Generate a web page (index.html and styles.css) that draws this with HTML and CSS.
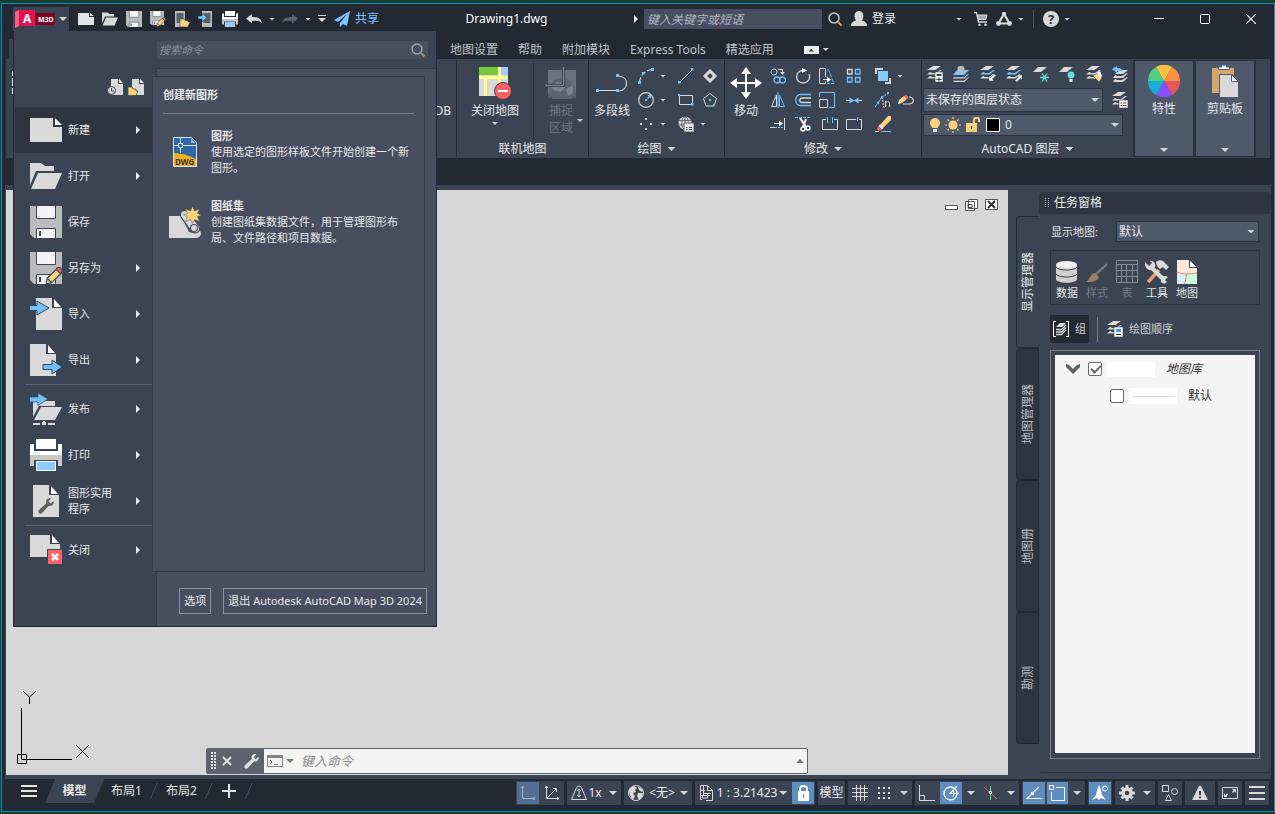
FILE: index.html
```html
<!DOCTYPE html>
<html lang="zh-CN">
<head>
    <meta charset="UTF-8">
    <meta name="viewport" content="width=device-width, initial-scale=1.0">
    <title>Drawing1.dwg</title>
    <link rel="stylesheet" href="styles.css">
</head>
<body>

<!-- shared icon shapes -->
<svg class="defs" aria-hidden="true">
    <symbol id="i-disk" viewBox="0 0 32 32">
        <path fill="#bbb" d="M0 0h32v32H4l-4-4z"/>
        <path fill="#f4f4f4" stroke="#3b4453" d="M6.500 -1h19v13.500h-19zM6.500 22.500h19v11h-19z"/>
        <path fill="#3b4453" d="M9 25h2v5H9z"/>
    </symbol>
    <symbol id="i-open" viewBox="0 0 32 32">
        <path fill="#d9d9d9" d="M0 3h11l4 3h9v5H6L0 25z"/>
        <path fill="#d9d9d9" d="M8 13h24l-7 16H1z"/>
    </symbol>
    <symbol id="i-print" viewBox="0 0 32 32">
        <path fill="#fff" d="M6 0h20v10H6zM0 5h4v7h24V5h4v11H0z"/>
        <path fill="#c8c8c8" d="M0 16h32v11h-4v-6H4v6H0z"/>
        <path fill="#8accff" stroke="#fff" d="M6.500 22.500h19v9h-19z"/>
    </symbol>
    <symbol id="i-pencil" viewBox="0 0 16 16">
        <path fill="#d9d9d9" stroke="#3b4453" d="M1 15l1-5 4 4z"/>
        <path fill="#ffd27a" stroke="#3b4453" d="M2 10l8-8 4 4-8 8z"/>
        <path fill="#ff6166" stroke="#3b4453" d="M10 2c1-2 3-2 4-1s2 3 0 5z"/>
    </symbol>
    <symbol id="i-layers" viewBox="0 0 16 16">
        <path fill="#d9d9d9" d="M6 0h8L8.500 4H0z"/>
        <path fill="#d9d9d9" d="M0 8.500L3 6h2L3.500 7H9l4-3h2L9.500 8.500zM0 12.500L3 10h2l-1.500 1H9l4-3h2l-5.500 4.500z"/>
    </symbol>
    <symbol id="i-layersblue" viewBox="0 0 16 16">
        <path fill="#d9d9d9" d="M6 0h8L8.500 4H0z"/>
        <path fill="#79c5ff" d="M0 8.500L3 6h2L3.500 7H9l4-3h2L9.500 8.500z"/>
        <path fill="#d9d9d9" d="M0 12.500L3 10h2l-1.500 1H9l4-3h2l-5.500 4.500z"/>
    </symbol>
    <symbol id="i-wrench" viewBox="0 0 16 16">
        <path d="M15.500 3l-3 2.500-2-2L13 .5c-2-1-5 0-5 3l.3 1.700L1 12c-2 2 1 5 3 3l6.800-7.300c3 1 5.700-1.700 4.700-4.700z"/>
    </symbol>
    <symbol id="i-mag" viewBox="0 0 14 14">
        <circle cx="6" cy="6" r="5" fill="none" stroke="#c6c9ce" stroke-width="1.500"/>
        <path stroke="#d8a75f" stroke-width="2" d="M10 10l3.500 3.500"/>
    </symbol>
</svg>

<div class="app">

    <!-- title bar -->
    <header class="titlebar">
        <button class="app-button" aria-label="应用程序菜单">
            <svg width="40" height="18" viewBox="0 0 40 18"><path fill="#80001f" d="M18 3h22v12H18z"/><path fill="#e51050" d="M4 0h16v16H4z"/><path fill="#ff5c80" d="M0 2l4-2v16l-4 2z"/><text x="8" y="13" class="logo-a">A</text><text x="23" y="12" class="logo-m">M3D</text></svg>
            <span class="caret big"></span>
        </button>
        <div class="qat">
            <button aria-label="新建"><svg width="16" height="16" viewBox="0 0 16 16"><path fill="#e4e4e4" d="M0 2h11v4h5v8H0z"/><path fill="#fff" d="M12 2l4 3h-4z"/></svg></button>
            <button aria-label="打开"><svg width="16" height="16"><use href="#i-open"/></svg></button>
            <button aria-label="保存"><svg width="16" height="16"><use href="#i-disk"/></svg></button>
            <button aria-label="另存为"><svg width="16" height="16"><use href="#i-disk" width="14" height="14"/><use href="#i-pencil" x="6" y="6" width="10" height="10"/></svg></button>
            <button aria-label="从移动设备打开"><svg width="16" height="16" viewBox="0 0 16 16"><path fill="#bbb" d="M1 0h10v16H1z"/><path fill="#5a6069" d="M2.500 2h7v10h-7z"/><path fill="#ffd27a" stroke="#222933" stroke-width=".5" d="M6 8h4l1 1.500h3V11h2l-2 5H6z"/></svg></button>
            <button aria-label="保存到移动设备"><svg width="16" height="16" viewBox="0 0 16 16"><path fill="#bbb" d="M4 0h10v16H4z"/><path fill="#5a6069" d="M5.500 2h7v10h-7z"/><path fill="#6fc1ff" stroke="#222933" stroke-width=".5" d="M0 5h4V2l5 4.500L4 11V8H0z"/></svg></button>
            <button aria-label="打印"><svg width="16" height="16"><use href="#i-print"/></svg></button>
            <button aria-label="放弃"><svg width="16" height="16" viewBox="0 0 16 16"><path fill="#d9d9d9" d="M0 7.500L6 3v3c6 0 9 2 10 6-2-2-5-2.500-10-2v2.500z"/></svg></button>
            <button class="thin" aria-label="放弃列表"><span class="caret"></span></button>
            <button aria-label="重做"><svg width="16" height="16" viewBox="0 0 16 16"><path fill="#5d646e" d="M16 7.500L10 3v3C4 6 1 8 0 12c2-2 5-2.500 10-2v2.500z"/></svg></button>
            <button class="thin" aria-label="重做列表"><span class="caret"></span></button>
            <button aria-label="自定义快速访问工具栏"><svg width="8" height="8" viewBox="0 0 8 8"><path fill="#d9d9d9" d="M0 0h8v1H0zM0 3h8L4 7z"/></svg></button>
            <button class="share"><svg width="16" height="16" viewBox="0 0 16 16"><path fill="#79c5ff" d="M16 0L0 9l4 2 9-8-7 9v4l3-3 4 2z"/></svg>共享</button>
        </div>
        <h1 class="doc-title">Drawing1.dwg</h1>
        <span class="caret-right"></span>
        <input class="help-search" type="text" placeholder="键入关键字或短语" aria-label="键入关键字或短语">
        <button class="mag" aria-label="搜索"><svg width="14" height="14"><use href="#i-mag"/></svg></button>
        <button class="account"><svg width="16" height="16" viewBox="0 0 16 16"><path fill="#d9d9d9" d="M0 15c0-4 3-5 5-5.500C2 5 4 0 8 0s6 5 3 9.500c2 .5 5 1.500 5 5.500z"/></svg>登录</button>
        <button class="tb-caret" aria-label="帐户菜单"><span class="caret"></span></button>
        <button class="tb-cart" aria-label="应用商店"><svg width="14" height="14" viewBox="0 0 14 14"><path fill="none" stroke="#d9d9d9" stroke-width="1.300" d="M0 .7h2.500L4.500 10H13"/><path fill="#a9a9a9" stroke="#d9d9d9" d="M3.500 3h9.500l-1 4.500H4.500z"/><circle fill="#d9d9d9" cx="5.500" cy="12.700" r="1.300"/><circle fill="#d9d9d9" cx="11.500" cy="12.700" r="1.300"/></svg></button>
        <button class="tb-apps" aria-label="Autodesk 应用"><svg width="16" height="14" viewBox="0 0 16 14"><path fill="none" stroke="#d9d9d9" stroke-width="2.200" d="M8 2l5.500 9.500h-11z"/><g fill="#d9d9d9"><circle cx="8" cy="2" r="2.200"/><circle cx="2.500" cy="11.500" r="2.400"/><circle cx="13.500" cy="11.500" r="2.400"/></g></svg></button>
        <button class="tb-caret" aria-label="应用菜单"><span class="caret"></span></button>
        <span class="tb-sep"></span>
        <button aria-label="帮助"><svg width="16" height="16" viewBox="0 0 16 16"><circle cx="8" cy="8" r="8" fill="#d9d9d9"/><text x="8" y="13" class="q-mark">?</text></svg></button>
        <button class="tb-caret" aria-label="帮助菜单"><span class="caret"></span></button>
        <div class="window-buttons">
            <button aria-label="最小化"><svg width="10" height="10" viewBox="0 0 10 10"><path fill="#fff" d="M0 4h10v1H0z"/></svg></button>
            <button aria-label="最大化"><svg width="10" height="10" viewBox="0 0 10 10"><rect x=".5" y=".5" width="9" height="9" rx="1" fill="none" stroke="#fff"/></svg></button>
            <button aria-label="关闭"><svg width="10" height="10" viewBox="0 0 10 10"><path stroke="#fff" stroke-width="1.200" d="M0 0l10 10M10 0L0 10"/></svg></button>
        </div>
    </header>

    <!-- ribbon tabs -->
    <nav class="tabs">
        <span class="tab-current"></span>
        <button>地图设置</button>
        <button>帮助</button>
        <button>附加模块</button>
        <button>Express Tools</button>
        <button>精选应用</button>
        <button class="tab-min" aria-label="最小化功能区"><span></span><i class="caret"></i></button>
    </nav>

    <!-- ribbon -->
    <div class="ribbon">
        <section class="panel p-data">
            <svg width="8" height="24" viewBox="0 0 8 24"><path fill="#e4e4e4" d="M0 0h8v5H0zM0 7h8v8H0zM0 17h8v6H0z"/></svg>
            <span>DB</span>
        </section>

        <section class="panel p-online">
            <div class="panel-body">
                <button class="big-btn close-map">
                    <svg width="32" height="32" viewBox="0 0 32 32"><path fill="#d9d9d9" d="M0 0h29v29H0z"/><path fill="#76c839" d="M0 0h19v8H0z"/><path fill="#a8c8ff" d="M22 0h7v8h-7z"/><path stroke="#ffff8a" stroke-width="3" d="M0 10.500h29M20.500 0v29M6.500 10.500V29"/><circle cx="24" cy="24" r="8.500" fill="#ff5f63" stroke="#3b4453"/><path fill="#fff" d="M19 23h10v2H19z"/></svg>
                    关闭地图
                    <span class="caret"></span>
                </button>
                <button class="big-btn snap" disabled>
                    <svg width="32" height="32" viewBox="0 0 32 32"><path fill="#6b7280" d="M3 3h28v28H3z"/><circle cx="17" cy="24" r="13" fill="#5c6473"/><path fill="#7c8390" d="M6 20l6-5 6 1 2 4-4 5-7-2zM21 22l7-4v8l-5 3z"/><path fill="#3b4453" d="M3 31v-6c1 3 3 5 5 6zM31 31v-6c-1 3-3 5-5 6z" opacity=".5"/><path fill="none" stroke="#3b4453" stroke-width="3" d="M0 18.500h18.500V0"/><path fill="none" stroke="#878d98" d="M0 18.500h18.500V0"/></svg>
                    捕捉<br>区域
                    <span class="caret"></span>
                </button>
            </div>
            <h2>联机地图</h2>
        </section>

        <section class="panel p-draw">
            <div class="panel-body">
                <button class="big-btn">
                    <svg width="32" height="32" viewBox="0 0 32 32"><path fill="none" stroke="#d9d9d9" stroke-width="1.200" d="M2 23.500h20M23 24c10-1 10-14 0-15"/><path fill="#6fc1ff" d="M0 22h3v3H0zM20 22h3v3h-3zM20 7h3v3h-3z"/></svg>
                    多段线
                </button>
                <div class="tools draw-tools">
                    <button aria-label="圆弧"><svg viewBox="0 0 16 16"><path fill="none" stroke="#d9d9d9" stroke-width="1.200" stroke-dasharray="5 2" d="M1.500 14C2 8 7 2 14 1.500"/><path fill="#6fc1ff" d="M0 13h3v3H0zM4 4h2v2H4zM13 0h3v3h-3z"/></svg></button>
                    <i class="caret"></i>
                    <button aria-label="直线"><svg viewBox="0 0 16 16"><path stroke="#d9d9d9" d="M2 14L14 2"/><path fill="#6fc1ff" d="M0 13h2.500v2.500H0zM13 0h2.500v2.500H13z"/></svg></button>
                    <i></i>
                    <button aria-label="区域覆盖"><svg viewBox="0 0 16 16"><path fill="none" stroke="#d9d9d9" stroke-width="3" d="M8 3l5 5-5 5-5-5z"/></svg></button>

                    <button aria-label="圆"><svg viewBox="0 0 16 16"><circle cx="8" cy="8" r="7.300" fill="none" stroke="#d9d9d9" stroke-width="1.200"/><path fill="#6fc1ff" d="M7 7h2v2H7zM10 3h3v3h-1v-1l-2 2-1-1 2-2h-1z"/></svg></button>
                    <i class="caret"></i>
                    <button aria-label="矩形"><svg viewBox="0 0 16 16"><path fill="none" stroke="#d9d9d9" d="M1.500 3.500h13v9h-13z"/><path fill="#6fc1ff" d="M0 2h2v2H0zM13 11h2.500v2.500H13z"/></svg></button>
                    <i></i>
                    <button aria-label="多边形"><svg viewBox="0 0 16 16"><path fill="none" stroke="#d9d9d9" d="M8 1.500l6.500 5-2.500 7.500H4L1.500 6.500z"/><path fill="#6fc1ff" d="M7 7h2v2H7zM11 12h2v2h-2z"/></svg></button>

                    <button aria-label="多点"><svg viewBox="0 0 16 16"><path fill="#d9d9d9" d="M7 2h2v2H7zM2 7h2v2H2zM12 7h2v2h-2zM7 12h2v2H7z"/></svg></button>
                    <i class="caret"></i>
                    <button aria-label="坐标系"><svg viewBox="0 0 16 16"><circle cx="7" cy="7" r="6.500" fill="#d9d9d9"/><path stroke="#3b4453" stroke-width=".7" d="M1 4.500h12M1 9h12M7 0v14"/><ellipse cx="7" cy="7" rx="3.300" ry="6.500" fill="none" stroke="#3b4453" stroke-width=".7"/><path fill="#e4e4e4" stroke="#3b4453" stroke-width=".7" d="M6 7h10v9H6z"/><path stroke="#3b4453" d="M8 11.500h1.500M11 11.500h3M8 13.500h1.500M11 13.500h3"/></svg></button>
                    <i class="caret"></i>
                </div>
            </div>
            <h2>绘图<span class="caret big"></span></h2>
        </section>

        <section class="panel p-modify">
            <div class="panel-body">
                <button class="big-btn">
                    <svg width="32" height="32" viewBox="0 0 32 32"><path fill="#fff" d="M16 0l5 7h-4v8h8v-4l7 5-7 5v-4h-8v8h4l-5 7-5-7h4v-8H7v4l-7-5 7-5v4h8V7h-4z"/></svg>
                    移动
                </button>
                <div class="tools modify-tools">
                    <button aria-label="复制"><svg viewBox="0 0 16 16"><circle cx="4" cy="4" r="3" fill="none" stroke="#d9d9d9"/><g fill="none" stroke="#6fc1ff" stroke-width="1.300"><circle cx="7" cy="12" r="3"/><circle cx="12.500" cy="12" r="3"/></g><path fill="#d9d9d9" d="M8 1h5v3h2l-2.500 3L10 4h2V2H8z"/></svg></button>
                    <button aria-label="旋转"><svg viewBox="0 0 16 16"><path fill="none" stroke="#d9d9d9" stroke-width="1.300" d="M8 2.500C-1 3 0 15 8 15c5 0 8-5 6-9"/><path fill="#fff" d="M7 0l5 2.500L7 5z"/></svg></button>
                    <button aria-label="拉伸"><svg viewBox="0 0 16 16"><path fill="none" stroke="#d9d9d9" d="M6.500 9V.5h-6v15h6v-2M4 11.500h6"/><path fill="#fff" d="M8 8.500l4 3-4 3z"/><path fill="none" stroke="#6fc1ff" stroke-dasharray="4 1" d="M9 1l6 14.500H8"/></svg></button>
                    <button aria-label="阵列"><svg viewBox="0 0 16 16"><g fill="none" stroke-width="1.300"><path stroke="#d9d9d9" d="M1.500 1.500h4.500v4.500H1.500z"/><path stroke="#6fc1ff" d="M9.500 1.500H14v4.500H9.500zM1.500 9.500h4.500V14H1.500zM9.500 9.500H14V14H9.500z"/></g></svg></button>
                    <button aria-label="绘图次序"><svg viewBox="0 0 16 16"><path fill="#d9d9d9" d="M0 0h8v2H2v4H0zM10 14h4v-4h2v6h-6z"/><path fill="#8accff" d="M3 3h10v10H3z"/></svg></button>
                    <i class="caret"></i>

                    <button aria-label="镜像"><svg viewBox="0 0 16 16"><path fill="none" stroke="#d9d9d9" d="M6.500 3v11.500h-5z"/><path fill="none" stroke="#6fc1ff" d="M9.500 3v11.500h5zM8 0v16"/></svg></button>
                    <button aria-label="偏移"><svg viewBox="0 0 16 16"><path fill="none" stroke="#6fc1ff" stroke-width="1.300" d="M16 2.500H6c-7 0-7 11 0 11h10"/><path fill="none" stroke="#d9d9d9" stroke-width="1.300" d="M16 6H7c-3 0-3 4.500 0 4.500h9"/></svg></button>
                    <button aria-label="缩放"><svg viewBox="0 0 16 16"><path fill="none" stroke="#6fc1ff" d="M.5 5V.5h15v15H10"/><path fill="none" stroke="#d9d9d9" d="M.5 7.500h8v8h-8z"/></svg></button>
                    <button aria-label="合并"><svg viewBox="0 0 16 16"><path stroke="#d9d9d9" d="M0 8.500h4M12 8.500h4"/><path fill="#6fc1ff" d="M3.500 5.500l4 2.500h1l4-2.500v6L8.500 9h-1l-4 2.500z"/></svg></button>
                    <button aria-label="编辑多段线"><svg viewBox="0 0 16 16"><path fill="none" stroke="#d9d9d9" stroke-dasharray="2 1" d="M0 15L7 5l7-4M7 5l2 11"/><path fill="none" stroke="#d9d9d9" d="M10.500 15V9M10.500 11c1-2 4-2 4 1v3"/><path fill="#6fc1ff" d="M6 4h2v2H6zM12 0h2v2h-2zM2 10h2v2H2z"/></svg></button>
                    <button class="revcloud" aria-label="修订云线"><svg viewBox="0 0 16 16"><path fill="none" stroke="#d9d9d9" stroke-width="1.200" d="M5 12h7c5-1 4-7-1-7"/><path fill="#ffd27a" d="M1 8l5-4 3 3-5 4z"/><path fill="#ff6166" d="M6 4l2-1.500L10.500 5 9 7z"/><path fill="#eee" d="M1 8l3 3-4 1z"/></svg></button>

                    <button aria-label="延伸"><svg viewBox="0 0 16 16"><path stroke="#d9d9d9" d="M14.500 2v12M4 7.500h6"/><path stroke="#6fc1ff" stroke-dasharray="2 1" d="M5 11.500h9"/><path stroke="#d9d9d9" d="M0 11.500h5"/><path fill="#fff" d="M9 4.500l4 3-4 3z"/></svg></button>
                    <button aria-label="修剪"><svg viewBox="0 0 16 16"><path stroke="#6fc1ff" stroke-dasharray="3 1" d="M0 1.500h16"/><path stroke="#fff" stroke-width="2" d="M5 2l6 9M11 3l-3 8"/><circle cx="8" cy="13" r="2" fill="none" stroke="#fff" stroke-width="1.500"/><circle cx="13" cy="12" r="2" fill="none" stroke="#fff" stroke-width="1.500"/></svg></button>
                    <button class="shift" aria-label="打断"><svg viewBox="0 0 16 16"><path fill="none" stroke="#d9d9d9" d="M4 3.500H.5v10h15v-10H12"/><path stroke="#6fc1ff" d="M5.500 1v6M10.500 1v6"/></svg></button>
                    <button aria-label="打断于点"><svg viewBox="0 0 16 16"><path fill="none" stroke="#d9d9d9" d="M10 3.500H.5v10h15v-10H13"/><path stroke="#6fc1ff" d="M11.500 1v4"/></svg></button>
                    <button aria-label="删除"><svg viewBox="0 0 16 16"><path fill="#ffd27a" d="M13 0h3v4l-8 8-3-3z"/><path fill="#eee" d="M5 8.500l3.500 3.500L7 13.500 3.500 10z"/><path fill="#ff6166" d="M3.500 10L7 13.500 4 15l-2-2z"/><path stroke="#6fc1ff" d="M6 15.500h10"/><path stroke="#d9d9d9" d="M0 15.500h4"/></svg></button>
                </div>
            </div>
            <h2>修改<span class="caret big"></span></h2>
        </section>

        <section class="panel p-layer">
            <div class="layer-tools">
                <button aria-label="图层特性"><svg viewBox="0 0 16 16"><use href="#i-layers"/><path fill="#fff" stroke="#3b4453" stroke-width=".6" d="M8 6h8v10H8z"/><path fill="#3b4453" d="M9.500 8h5v2h-5zM9.500 13h5v1h-5zM11.500 11.500h1v4h-1z"/></svg></button>
                <button aria-label="置为当前"><svg viewBox="0 0 16 16"><path fill="#79c5ff" d="M4 4h12l-5 5H0z"/><circle cx="8" cy="3" r="3.500" fill="#bbb"/><path fill="#d9d9d9" d="M2 10l-1.500 1.200H11l4-3.500h1L11.500 12.500H0zM2 13.500L.5 14.700H11l4-3.500h1L11.500 16H0z"/></svg></button>
                <button aria-label="匹配图层"><svg viewBox="0 0 16 16"><use href="#i-layersblue"/><path fill="#fff" stroke="#3b4453" stroke-width=".5" d="M16 9.500l-3.500 3.500 1.500 2H9v-5l1.500 1.500L14.500 8z"/></svg></button>
                <button aria-label="上一个"><svg viewBox="0 0 16 16"><use href="#i-layersblue"/><path fill="#fff" stroke="#3b4453" stroke-width=".5" d="M9 14.500l3.500-3.500L11 9h5v5l-1.500-1.500L10.500 16z"/></svg></button>
                <button aria-label="冻结"><svg viewBox="0 0 16 16"><path fill="#d9d9d9" d="M5 1h9L8 6H0z"/><path stroke="#62e0e0" stroke-width="1.300" d="M7 11.500h9M9 7.500l5 8M14 7.500l-5 8"/></svg></button>
                <button aria-label="关闭图层"><svg viewBox="0 0 16 16"><path fill="#d9d9d9" d="M5 1h9L8 6H0z"/><circle cx="12" cy="9" r="3.500" fill="#62e0e0"/><path fill="#fff" d="M10.500 13h3v3h-3z"/></svg></button>
                <button aria-label="图层匹配"><svg viewBox="0 0 16 16"><use href="#i-layers"/><path fill="#ffd27a" stroke="#3b4453" stroke-width=".5" d="M7 10l4-3 5 5-3 4z"/><path fill="#fff" d="M11 7l3-2 2 5-2 2z"/></svg></button>
                <button aria-label="恢复"><svg viewBox="0 0 16 16"><path fill="#d9d9d9" d="M8 4h8l-5 4H3zM3 9h2L4 10h6l5-3h1l-5 5H1zM3 13h2L4 14h6l5-3h1l-5 5H1z"/><path fill="#6fc1ff" d="M0 3l5-3v2c4 0 5 1 6 4-2-1-3-1-6-1v2z"/></svg></button>
            </div>
            <div class="layer-row">
                <div class="combo state">
                    <select aria-label="图层状态"><option>未保存的图层状态</option></select>
                </div>
                <button aria-label="图层状态管理器"><svg width="16" height="16" viewBox="0 0 16 16"><use href="#i-layers"/><path fill="#fff" stroke="#3b4453" stroke-width=".6" d="M7 8h9v8H7z"/><path stroke="#3b4453" d="M8.500 11h1.500M11 11h3.500M8.500 13.500h1.500M11 13.500h3.500"/></svg></button>
            </div>
            <div class="combo current-layer">
                <svg width="72" height="16" viewBox="0 0 72 16">
                    <circle cx="6" cy="6" r="5" fill="#ffd27a"/><path fill="#ffd27a" d="M3 8h6v3H3z"/><path fill="#eee" d="M4 12h4v3H4z"/>
                    <circle cx="24" cy="8" r="4.500" fill="#ffd27a"/><path stroke="#ffd27a" stroke-width="1.200" d="M24 0v2M24 14v2M16 8h2M30 8h2M18.500 2.500l1.500 1.500M28 12l1.500 1.500M29.500 2.500L28 4M20 12l-1.500 1.500"/>
                    <path fill="#ffd27a" d="M37 6h11v9H37z"/><path fill="none" stroke="#ffd27a" stroke-width="2" d="M45 6V3c0-3 5-3 5 0v2"/><path fill="#3b4453" d="M42 9h1v3h-1z"/>
                    <path stroke="#fff" d="M57.500 1.500h13v13h-13z"/>
                </svg>
                <select aria-label="图层"><option>0</option></select>
            </div>
            <h2>AutoCAD 图层<span class="caret big"></span></h2>
        </section>

        <button class="folded">
            <svg width="32" height="32" viewBox="0 0 32 32"><path fill="#ffc23e" d="M16 16L8 2a16 16 0 0 1 16 0z"/><path fill="#ff9045" d="M16 16l8-14a16 16 0 0 1 8 14z"/><path fill="#e65858" d="M16 16h16a16 16 0 0 1-8 14z"/><path fill="#8a50ff" d="M16 16l8 14a16 16 0 0 1-16 0z"/><path fill="#13b1d4" d="M16 16L8 30a16 16 0 0 1-8-14z"/><path fill="#50d080" d="M16 16H0A16 16 0 0 1 8 2z"/></svg>
            特性
            <span class="caret big"></span>
        </button>
        <button class="folded">
            <svg width="32" height="32" viewBox="0 0 32 32"><path fill="#d5a76d" d="M3 3h22v25H3z"/><path fill="#fff" stroke="#4f596c" d="M9.500 4.500V2h3V0h5v2h3v2.500z"/><path fill="#d9d9d9" stroke="#4f596c" d="M10.500 9.500h13l6 6.500v16.500h-19z"/><path fill="#fff" stroke="#4f596c" d="M22.500 9.500v7h7z"/></svg>
            剪贴板
            <span class="caret big"></span>
        </button>
    </div>

    <!-- drawing area and task pane -->
    <main class="workspace">
        <div class="canvas">
            <div class="doc-buttons">
                <button aria-label="最小化图形"><svg width="13" height="13" viewBox="0 0 13 13"><path fill="#fff" stroke="#555" d="M.5 6.500h12v4H.5z"/></svg></button>
                <button aria-label="还原图形"><svg width="13" height="13" viewBox="0 0 13 13"><path fill="#fff" stroke="#555" d="M3.500.5h9v9h-9zM.5 2.500h9v9h-9z"/><path fill="none" stroke="#444" d="M3 5.500h4v3H3z"/></svg></button>
                <button aria-label="关闭图形"><svg width="13" height="13" viewBox="0 0 13 13"><path fill="#fff" stroke="#555" d="M.5.500h12v10H.5z"/><path stroke="#333" stroke-width="2" d="M3 2l7 7M10 2L3 9"/></svg></button>
            </div>
            <svg class="ucs" width="74" height="76" viewBox="0 0 74 76"><path fill="none" stroke="#000" d="M6 1l6.500 6L19 1M12.500 7v7M4.500 18v51M4.500 69.500H55M.5 64.500h9v9h-9zM59 55l13 13M72 55L59 68"/></svg>
            <div class="command">
                <svg class="grip" width="5" height="18" viewBox="0 0 5 18"><path stroke="#e0e0e0" stroke-width="2" stroke-dasharray="2 1" d="M1 0v18M4 0v18"/></svg>
                <button aria-label="关闭命令行"><svg width="10" height="10" viewBox="0 0 10 10"><path stroke="#e0e0e0" stroke-width="2" d="M1 1l8 8M9 1L1 9"/></svg></button>
                <button aria-label="自定义"><svg width="15" height="15" fill="#e0e0e0"><use href="#i-wrench"/></svg></button>
                <div class="command-input">
                    <svg width="17" height="13" viewBox="0 0 17 13"><path fill="none" stroke="#858585" d="M.5.500h15v11H.5z"/><path fill="#858585" d="M0 0h16v3H0z"/><path fill="none" stroke="#858585" d="M3 5l2 2-2 2M7 9.500h4"/></svg>
                    <span class="caret big"></span>
                    <input type="text" placeholder="键入命令" aria-label="键入命令">
                    <span class="caret big up"></span>
                </div>
            </div>
        </div>

        <aside class="palette">
            <nav class="side-tabs">
                <button class="on">显示管理器</button>
                <button>地图管理器</button>
                <button>地图册</button>
                <button>勘测</button>
            </nav>
            <div class="pane">
                <h2><svg width="4" height="10" viewBox="0 0 4 10"><path stroke="#9aa0aa" stroke-dasharray="1 1" d="M.5 0v10M3.500 0v10"/></svg>任务窗格</h2>
                <div class="pane-body">
                    <div class="map-row">
                        <label for="map">显示地图:</label>
                        <div class="combo"><select id="map"><option>默认</option></select></div>
                    </div>
                    <div class="pane-tools">
                        <button><svg viewBox="0 0 24 24"><path fill="#d0d0d0" d="M1 5v14c0 5 21 5 21 0V5z"/><ellipse cx="11.500" cy="4.500" rx="10.500" ry="3.500" fill="#f0f0f0"/><path fill="none" stroke="#3b4453" d="M1 7c2 4 19 4 21 0M1 14c2 4 19 4 21 0"/></svg>数据</button>
                        <button disabled><svg viewBox="0 0 24 24"><path stroke="#7d828b" stroke-width="2" d="M11 14L22 4"/><path fill="#9a8065" d="M1 22c5-3 4-9 9-9l4 4c-2 5-8 5-13 5z"/></svg>样式</button>
                        <button disabled><svg viewBox="0 0 24 24"><path fill="none" stroke="#858b95" d="M1.500.500h21v22h-21zM1 4.500h22M1 10.500h22M1 16.500h22M6.500 4v19M11.500 4v19M17.500 4v19"/></svg>表</button>
                        <button><svg viewBox="0 0 24 24"><path stroke="#ef9d68" stroke-width="3.500" d="M14 10L3 22"/><path fill="#d9d9d9" d="M11 2c3-3 7-2 9 1l4 4-3 3-3-3-3 2-3-3z"/><path fill="none" stroke="#d9d9d9" stroke-width="4" d="M5 6l14 14"/><path fill="#d9d9d9" d="M0 2l4 4 3-3-2-2c4-1 6 3 5 6L7 10C3 11-1 7 0 2zM16 20c0-4 4-5 7-3l-3 3 2 2c-3 3-7 1-6-2z"/></svg>工具</button>
                        <button><svg viewBox="0 0 24 24"><path fill="#ffe9d9" d="M2 0h20v24H2z"/><path fill="#d8eeff" d="M2 13l9 1v10H2z"/><path fill="#d2f8dc" d="M11 14l11-1v11H9z"/><path fill="none" stroke="#e08080" d="M2 12c7 3 13 2 20 1M12 14c-2 3 0 6-3 10"/><path fill="#fff" stroke="#3b4453" d="M14.500 0v7.500H23z"/><path fill="#3b4453" d="M15 0h7v7z"/></svg>地图</button>
                    </div>
                    <div class="mode-row">
                        <button class="on"><svg width="16" height="16" viewBox="0 0 16 16"><path fill="none" stroke="#fff" d="M3 .5H.5v15H3M13 .5h2.500v15H13"/><path fill="#d9d9d9" d="M7 2h6L9 6H3z"/><path fill="none" stroke="#d9d9d9" stroke-width="1.300" d="M3 8.500h5.500l4.500-4.500M3 11h5.500l4.500-4.500M3 13.500h5.500L13 9"/></svg>组</button>
                        <span class="mode-sep"></span>
                        <button><svg width="16" height="16" viewBox="0 0 16 16"><use href="#i-layers"/><path fill="#fff" stroke="#3b4453" stroke-width=".6" d="M7 6h9v10H7z"/><path fill="#4a9fe8" d="M9 8h5v3H9z"/><path fill="#222933" d="M9 13h5v1H9z"/></svg>绘图顺序</button>
                    </div>
                    <div class="tree">
                        <div class="tree-list">
                            <div class="tree-row">
                                <svg width="14" height="10" viewBox="0 0 14 10"><path fill="#606060" d="M0 0l3 1 4 4 4-4 3-1v3l-7 7-7-7z"/></svg>
                                <input type="checkbox" id="lib" checked>
                                <span class="swatch"></span>
                                <label class="italic" for="lib">地图库</label>
                            </div>
                            <div class="tree-row child">
                                <input type="checkbox" id="def">
                                <span class="swatch line"></span>
                                <label for="def">默认</label>
                            </div>
                        </div>
                    </div>
                </div>
            </div>
        </aside>
    </main>

    <!-- status bar -->
    <footer class="statusbar">
        <button class="burger" aria-label="布局菜单"><svg width="16" height="12" viewBox="0 0 16 12"><path fill="#e4e4e4" d="M0 0h16v2H0zM0 5h16v2H0zM0 10h16v2H0z"/></svg></button>
        <button class="layout on">模型</button>
        <button class="layout">布局1</button><span class="slash"></span>
        <button class="layout">布局2</button><span class="slash"></span>
        <button class="plus" aria-label="新建布局"><svg width="14" height="14" viewBox="0 0 14 14"><path fill="#e4e4e4" d="M6 0h2v6h6v2H8v6H6V8H0V6h6z"/></svg></button><span class="slash"></span>

        <div class="status-tools">
            <div class="group">
                <button class="cell dim" aria-label="模型空间"><svg viewBox="0 0 16 16"><path fill="none" stroke="#a9b4c4" d="M2.500 1v12.500H15M1 3l1.500-2L4 3M13 12l2 1.500-2 1.500"/></svg></button>
                <button class="cell" aria-label="显示 UCS"><svg viewBox="0 0 16 16"><path fill="none" stroke="#d9d9d9" d="M2.500 1v12.500H15M1 3l1.500-2L4 3M13 12l2 1.500-2 1.500M3 13l9-9M9 3.500h3.500V7"/></svg></button>
            </div>
            <button class="group g-scale"><svg viewBox="0 0 16 16"><path fill="none" stroke="#d9d9d9" d="M.5 14.500h15L11 4c-1-4-5-4-6 0zM8 4v8M6 6l2-2 2 2M6 10l2 2 2-2"/></svg><span>1x</span><i class="caret big"></i></button>
            <button class="group g-geo"><svg viewBox="0 0 16 16"><circle cx="8" cy="8" r="7.500" fill="#3b4453" stroke="#d9d9d9"/><path fill="#d9d9d9" d="M1 4l5-3 3 2-2 2 1 2-3 1 2 3-2 4C2 12 1 8 1 6zM10 2l3 1 2 3-1 1-3-2zM10 8h5l-1 4-3 3-2-4z"/></svg><span>&lt;无&gt;</span><i class="caret big"></i></button>
            <div class="group g-vp">
                <button><svg viewBox="0 0 16 16"><path fill="none" stroke="#d9d9d9" d="M3 14.500H1.500v-14h7l5 5v10H7M8.500.500v5h5M2 5.500h4M2 10.500h9M4.500 1v9M8.500 8v5h-5v-3M4 8.500h8"/></svg><span>1 : 3.21423</span><i class="caret big"></i></button>
                <button class="cell on" aria-label="锁定"><svg viewBox="0 0 16 16"><path fill="#fff" d="M3 6h11v10H3z"/><path fill="none" stroke="#fff" stroke-width="2" d="M5 6V4c0-4 7-4 7 0v2"/><path fill="#5f8dc0" d="M8 9h1v4H8z"/></svg></button>
            </div>
            <button class="group g-model">模型</button>
            <div class="group g-grid">
                <button class="cell" aria-label="栅格"><svg viewBox="0 0 16 16"><path stroke="#d9d9d9" d="M4.500 0v16M8.500 0v16M12.500 0v16M0 3.500h16M0 7.500h16M0 11.500h16"/></svg></button>
                <button class="cell" aria-label="捕捉"><svg viewBox="0 0 16 16"><path stroke="#d9d9d9" stroke-width="2" stroke-dasharray="2 3" d="M2 3h12M2 8h12M2 13h12"/></svg></button>
                <button class="mini" aria-label="捕捉设置"><i class="caret big"></i></button>
            </div>
            <div class="group g-ortho">
                <button class="cell" aria-label="正交"><svg viewBox="0 0 16 16"><path fill="none" stroke="#d9d9d9" d="M.5 0v15.500H16M.5 10.500h5v5"/></svg></button>
                <button class="cell on" aria-label="极轴追踪"><svg viewBox="0 0 16 16"><circle cx="7.500" cy="8.500" r="6.500" fill="none" stroke="#fff" stroke-width="1.300"/><path fill="none" stroke="#fff" stroke-width="1.200" d="M16 8.500H7L14 1M10 5.500c1 1 1 4 0 6"/></svg></button>
                <button class="mini" aria-label="极轴设置"><i class="caret big"></i></button>
                <button class="cell" aria-label="等轴测"><svg viewBox="0 0 16 16"><path stroke="#e86060" d="M1 2l13 12"/><path stroke="#5fdc8c" d="M7.500 1v14"/><path fill="#3b4453" stroke="#fff" d="M6.500 6.500h2v2h-2z"/></svg></button>
                <button class="mini" aria-label="等轴测设置"><i class="caret big"></i></button>
            </div>
            <div class="group g-snap">
                <button class="cell on" aria-label="对象追踪"><svg viewBox="0 0 16 16"><path fill="none" stroke="#fff" stroke-width="1.200" d="M16 13.500H1L13 2"/><path fill="#fff" d="M5 7h3v3H5z"/></svg></button>
                <button class="cell on" aria-label="对象捕捉"><svg viewBox="0 0 16 16"><path fill="none" stroke="#fff" d="M7 2.500h8.500v13h-13V7M.5.500h4v4h-4z"/></svg></button>
                <button class="mini" aria-label="捕捉选项"><i class="caret big"></i></button>
            </div>
            <div class="group"><button class="cell on wide" aria-label="注释可见性"><svg viewBox="0 0 16 16"><path fill="#fff" d="M7 0l2 5 1 5 4 5-5-2-2 2-2-2-5 2 4-5 1-5z"/><circle cx="13" cy="3.500" r="2.500" fill="none" stroke="#fff"/></svg></button></div>
            <div class="group g-gear">
                <button class="cell" aria-label="切换工作空间"><svg viewBox="0 0 16 16"><circle cx="8" cy="8" r="4" fill="none" stroke="#d9d9d9" stroke-width="3.500"/><path stroke="#d9d9d9" stroke-width="3" d="M8 0v4M8 12v4M0 8h4M12 8h4M2.500 2.500L5 5M11 11l2.500 2.500M13.500 2.500L11 5M5 11l-2.500 2.500"/></svg></button>
                <button class="mini" aria-label="工作空间列表"><i class="caret big"></i></button>
            </div>
            <div class="group"><button class="cell wide" aria-label="隔离对象"><svg viewBox="0 0 16 16"><path fill="none" stroke="#d9d9d9" d="M.5.500h6v6h-6zM6.500 9.500l3 6h-6z"/><circle cx="12.500" cy="6.500" r="3" fill="none" stroke="#d9d9d9"/></svg></button></div>
            <div class="group g-warn"><button class="cell" aria-label="图形性能"><svg viewBox="0 0 16 16"><path fill="#d9d9d9" d="M7 1h2l7 14H0z"/><path fill="#3b4453" d="M7 6h2v4H7zM7 11.500h2v2H7z"/></svg></button></div>
            <div class="group"><button class="cell wide" aria-label="全屏显示"><svg viewBox="0 0 16 16"><path fill="none" stroke="#d9d9d9" d="M.5 2.500h15v11H.5z"/><path fill="#d9d9d9" d="M10 4h4v4l-1.500-1.500L11 8l-1-1 1.500-1.500zM2 12V8.500l1.500 1.500L5 8.500l1 1L4.500 11l1 1z"/></svg></button></div>
            <div class="group"><button class="cell wide" aria-label="自定义"><svg viewBox="0 0 16 16"><path fill="#d9d9d9" d="M0 1h16v2H0zM0 7h16v2H0zM0 13h16v2H0z"/></svg></button></div>
        </div>
    </footer>

    <!-- application menu -->
    <div class="menu">
        <div class="menu-top">
            <div class="menu-search"><input type="text" placeholder="搜索命令" aria-label="搜索命令"><svg width="14" height="14"><use href="#i-mag"/></svg></div>
        </div>
        <nav class="menu-nav">
            <div class="recent">
                <button aria-label="最近使用的文档"><svg width="17" height="17" viewBox="0 0 17 17"><path fill="#d9d9d9" d="M4 0h7v5h5v11H4z"/><path fill="#fff" d="M12 0l4 4h-4z"/><circle cx="4.500" cy="11.500" r="4" fill="#d9d9d9" stroke="#3b4453"/><path fill="none" stroke="#3b4453" d="M4.500 9v3H7"/></svg></button>
                <button aria-label="打开文档"><svg width="17" height="17" viewBox="0 0 17 17"><path fill="#d9d9d9" d="M4 0h7v5h5v11H4z"/><path fill="#fff" d="M12 0l4 4h-4z"/><path fill="#ffd27a" stroke="#3b4453" stroke-width=".7" d="M0 8h4l1 2h3v2h2l-2 4.500H0z"/></svg></button>
            </div>
            <button class="item on more"><svg viewBox="0 0 32 32"><path fill="#d9d9d9" d="M0 4h23v9h9v15H0z"/><path fill="#fff" d="M25 4l7 7h-7z"/></svg><span>新建</span></button>
            <button class="item more"><svg><use href="#i-open"/></svg><span>打开</span></button>
            <button class="item"><svg><use href="#i-disk"/></svg><span>保存</span></button>
            <button class="item more"><svg viewBox="0 0 32 32"><use href="#i-disk" width="32" height="32"/><use href="#i-pencil" x="15" y="15" width="18" height="18"/></svg><span>另存为</span></button>
            <button class="item more"><svg viewBox="0 0 32 32"><path fill="#d9d9d9" d="M6 0h16v10h10v22H6z"/><path fill="#fff" d="M24 1l7 8h-7z"/><path fill="#6fc1ff" stroke="#3b4453" d="M-1 7.500h8V3l12 7-12 7v-4.500h-8z"/></svg><span>导入</span></button>
            <button class="item more"><svg viewBox="0 0 32 32"><path fill="#d9d9d9" d="M0 0h16v10h10v22H0z"/><path fill="#fff" d="M18 1l7 8h-7z"/><path fill="#6fc1ff" stroke="#3b4453" d="M13 20.500h9V16l10 7-10 7v-4.500h-9z"/></svg><span>导出</span></button>
            <hr>
            <button class="item more"><svg viewBox="0 0 32 32"><path fill="#d9d9d9" d="M3 8h22v5H9L3 24zM11 14h21l-7 13H4zM3 30h7v2H3zM18 30h7v2h-7zM12 29h4v3h-4zM13 28h2v3h-2z"/><path fill="#6fc1ff" stroke="#3b4453" stroke-width=".7" d="M-1 4h9V0l10 6-10 6.500V9h-9z"/></svg><span>发布</span></button>
            <button class="item more"><svg><use href="#i-print"/></svg><span>打印</span></button>
            <button class="item more"><svg viewBox="0 0 32 32"><path fill="#d9d9d9" d="M3 0h16v10h10v22H3z"/><path fill="#fff" d="M21 1l7 8h-7z"/><use href="#i-wrench" x="8" y="13" width="16" height="16" fill="#606060"/></svg><span>图形实用程序</span></button>
            <hr>
            <button class="item more"><svg viewBox="0 0 32 32"><path fill="#d9d9d9" d="M0 1h20v9h10v13H0z"/><path fill="#fff" d="M22 1l7 8h-7z"/><path fill="#ff6166" stroke="#3b4453" d="M17.500 15.500h15v15h-15z"/><path stroke="#fff" stroke-width="2.500" d="M22 20l6 6M28 20l-6 6"/></svg><span>关闭</span></button>
        </nav>
        <div class="menu-side">
            <div class="submenu">
                <h3>创建新图形</h3>
                <button class="entry">
                    <svg width="32" height="32" viewBox="0 0 32 32"><path fill="#3067a6" stroke="#d6e4f2" d="M4.500 1.500h18l5 5v24h-23z"/><path fill="#f6b21c" d="M5 17c7 0 14 2 22 6v7H5z"/><path fill="#8fb3d8" d="M22 2v5h5z"/><path fill="none" stroke="#d6e4f2" d="M5 9.500h22M11.500 2v15"/><path fill="#3067a6" stroke="#d6e4f2" d="M9.500 7.500h4v4h-4z"/><text x="6" y="29" class="dwg">DWG</text></svg>
                    <span><b>图形</b>使用选定的图形样板文件开始创建一个新图形。</span>
                </button>
                <button class="entry">
                    <svg width="32" height="32" viewBox="0 0 32 32"><path fill="#d9d9d9" d="M0 10h12L20 26c4 2 8 0 8-4 6 3 5 10-2 10H0z"/><path fill="#d9d9d9" stroke="#464e60" stroke-width="1.200" d="M12 11c-2-5 2-8 6-6l12 15c3 6-4 9-8 5z"/><circle cx="25" cy="22" r="3.500" fill="#d9d9d9" stroke="#464e60" stroke-width="1.200"/><path fill="#ffd27a" stroke="#464e60" stroke-width=".5" d="M23.500 0l2 5 5-2-2 4.500 4 1.500-4 1.500 2 5-5-2-2 4-2-4-5 2 2-5-4-1.500 4-1.500-2-4.500 5 2z"/></svg>
                    <span><b>图纸集</b>创建图纸集数据文件，用于管理图形布局、文件路径和项目数据。</span>
                </button>
            </div>
            <div class="menu-foot">
                <button>选项</button>
                <button>退出 Autodesk AutoCAD Map 3D 2024</button>
            </div>
        </div>
    </div>
</div>

</body>
</html>
```

FILE: styles.css
```css
* {
    box-sizing: border-box;
}

body {
    margin: 0;
    height: 100vh;
    padding: 3px 0 2px 1px;
    background-color: #15402f;
    color: #e8e8e8;
    font-family: "Noto Sans", "Noto Sans CJK SC", sans-serif;
    font-size: 12px;
    line-height: 16px;
    overflow: hidden;
}

button, input, select {
    margin: 0;
    padding: 0;
    border: 0;
    background: none;
    color: inherit;
    font: inherit;
}

button {
    display: flex;
    align-items: center;
    justify-content: center;
    white-space: nowrap;
}

svg {
    display: block;
    flex: none;
}

h1, h2, h3 {
    margin: 0;
    font-size: 12px;
    font-weight: normal;
}

.defs {
    position: absolute;
    width: 0;
    height: 0;
}

.app {
    position: relative;
    display: flex;
    flex-direction: column;
    height: 100%;
    border: 1px solid #0f8dbf;
    background-color: #222933;
}

/* drop-down triangles */
.caret {
    display: block;
    flex: none;
    width: 6px;
    height: 3px;
    background-color: #d0d3d8;
    clip-path: polygon(0 0, 100% 0, 50% 100%);
}

.caret.big {
    width: 8px;
    height: 4px;
}

.caret-right {
    width: 4px;
    height: 8px;
    margin-right: 6px;
    background-color: #e8e8e8;
    clip-path: polygon(0 0, 100% 50%, 0 100%);
}

/* title bar */
.titlebar {
    display: flex;
    align-items: center;
    flex: none;
    height: 30px;
}

.app-button {
    gap: 4px;
    width: 56px;
    height: 24px;
    margin-left: 11px;
    background-color: #3b4453;
}

.logo-a {
    fill: #fff;
    font-size: 12px;
    font-weight: bold;
}

.logo-m {
    fill: #fff;
    font-size: 7px;
    font-weight: bold;
}

.qat {
    display: flex;
    align-items: center;
    gap: 8px;
    margin-left: 9px;
}

.qat .thin {
    width: 4px;
}

.share {
    gap: 5px;
    color: #79c5ff;
}

.doc-title {
    flex: 1;
    text-align: center;
    color: #fff;
}

.help-search {
    width: 178px;
    height: 20px;
    padding: 0 3px;
    background-color: #464e60;
}

.help-search::placeholder {
    color: #b4b8c0;
    font-style: italic;
}

.mag {
    width: 14px;
    margin: 0 9px 0 6px;
}

.account {
    justify-content: flex-start;
    gap: 5px;
    width: 100px;
}

.tb-caret {
    width: 16px;
    height: 24px;
}

.tb-cart {
    width: 28px;
}

.tb-apps {
    width: 18px;
}

.tb-sep {
    width: 1px;
    height: 18px;
    margin: 0 9px 0 4px;
    background-color: #4c5464;
}

.q-mark {
    fill: #222933;
    font-size: 13px;
    font-weight: bold;
    text-anchor: middle;
}

.window-buttons {
    display: flex;
    margin-left: 61px;
}

.window-buttons button {
    width: 46px;
    height: 30px;
}

/* ribbon tabs */
.tabs {
    display: flex;
    align-items: center;
    flex: none;
    gap: 20px;
    height: 25px;
    padding: 6px 0 0 7px;
    color: #c0c4ca;
}

.tab-current {
    align-self: flex-end;
    width: 60px;
    height: 20px;
    margin-right: 361px;
    background-color: #3b4453;
}

.tab-min {
    gap: 4px;
    margin-left: 10px;
}

.tab-min span {
    width: 15px;
    height: 8px;
    padding: 3px 5px;
    background-color: #eee;
}

.tab-min span::before {
    content: "";
    display: block;
    width: 5px;
    height: 3px;
    background-color: #444;
    clip-path: polygon(0 100%, 100% 100%, 50% 0);
}

/* ribbon */
.ribbon {
    display: flex;
    flex: none;
    height: 99px;
    margin: 0 4px;
    background-color: #3b4453;
}

.panel {
    display: flex;
    flex-direction: column;
    flex: none;
    margin: 1px 0;
    border-right: 1px solid #252b36;
}

.panel h2 {
    display: flex;
    align-items: center;
    justify-content: center;
    gap: 6px;
    margin-top: auto;
    height: 16px;
}

.panel-body {
    display: flex;
}

.p-data {
    flex-direction: row;
    justify-content: space-between;
    width: 451px;
    padding: 11px 5px 0 6px;
}

.p-data span {
    padding-top: 32px;
}

.big-btn {
    flex-direction: column;
    justify-content: flex-start;
    padding-top: 7px;
    line-height: 17px;
}

.big-btn svg {
    margin-bottom: 3px;
}

.p-online {
    width: 132px;
}

.close-map {
    width: 77px;
    height: 76px;
    border-right: 1px solid #252b36;
    margin-top: 3px;
    padding-top: 4px;
}

.close-map .caret {
    margin-top: 3px;
}

.snap {
    position: relative;
    width: 54px;
    color: #6c7482;
}

.snap .caret {
    position: absolute;
    right: 5px;
    top: 59px;
}

.p-draw {
    width: 136px;
}

.p-draw .big-btn {
    width: 46px;
}

.tools {
    display: grid;
    grid-template-rows: repeat(3, 24px);
    align-items: center;
    justify-items: center;
    padding-top: 4px;
}

.tools svg {
    width: 16px;
    height: 16px;
}

.draw-tools {
    grid-template-columns: 22px 12px 34px 0 14px;
}

.draw-tools i:not(.caret) {
    width: 0;
}

.p-modify {
    width: 197px;
}

.p-modify .big-btn {
    width: 42px;
}

.modify-tools {
    grid-template-columns: 22px 28px 20px 34px 24px 14px;
}

.modify-tools .caret {
    justify-self: start;
    margin-left: 2px;
}

.modify-tools .shift {
    padding-left: 6px;
}

.revcloud {
    padding-left: 8px;
}

.p-layer {
    width: 212px;
}

.layer-tools {
    display: flex;
    justify-content: space-between;
    height: 27px;
    padding: 6px 5px 0;
    align-items: flex-start;
}

.layer-tools svg {
    width: 16px;
    height: 16px;
}

.layer-row {
    display: flex;
    justify-content: space-between;
    padding: 1px 5px 2px 0;
}

.combo {
    position: relative;
    display: flex;
    align-items: center;
    height: 22px;
    border: 1px solid #2b313d;
    background-color: #4f596c;
}

.combo select {
    flex: 1;
    appearance: none;
    height: 20px;
    padding: 0 2px;
}

.combo::after {
    content: "";
    position: absolute;
    right: 3px;
    width: 8px;
    height: 4px;
    background-color: #d0d3d8;
    clip-path: polygon(0 0, 100% 0, 50% 100%);
    pointer-events: none;
}

.combo.state {
    width: 180px;
    height: 24px;
    margin-left: 1px;
}

.current-layer {
    width: 200px;
    margin-left: 1px;
    padding-left: 5px;
}

.current-layer select {
    padding-left: 4px;
}

.folded {
    flex-direction: column;
    justify-content: flex-start;
    flex: none;
    width: 61px;
    height: 97px;
    margin-top: 1px;
    padding: 4px 0;
    border: 1px solid #2b313d;
    border-right-width: 2px;
    background-color: #4f596c;
}

.folded svg {
    margin-bottom: 4px;
}

.folded .caret {
    margin-top: auto;
}

/* drawing area */
.workspace {
    display: flex;
    flex: 1;
    min-height: 0;
    margin: 27px 3px 0;
    padding: 5px 0 4px 1px;
    background-color: #3b4453;
}

.canvas {
    position: relative;
    flex: 1;
    background-color: #d7d7d7;
}

.doc-buttons {
    display: flex;
    justify-content: flex-end;
    gap: 7px;
    padding: 9px 10px;
}

.ucs {
    position: absolute;
    left: 11px;
    bottom: 9px;
}

.command {
    position: absolute;
    left: 200px;
    bottom: 1px;
    display: flex;
    align-items: center;
    width: 602px;
    height: 26px;
    padding-left: 4px;
    border: 1px solid #5e636d;
    border-radius: 2px;
    background-color: #5e636d;
}

.command > button:nth-of-type(1) {
    width: 22px;
}

.command > button:nth-of-type(2) {
    width: 26px;
}

.command-input {
    display: flex;
    align-items: center;
    flex: 1;
    gap: 2px;
    height: 24px;
    padding: 0 3px;
    background-color: #f4f4f4;
}

.command-input input {
    flex: 1;
    padding-left: 5px;
    font-size: 13px;
    color: #333;
}

.command-input input::placeholder {
    color: #8c8c8c;
    font-style: italic;
}

.command-input .caret {
    background-color: #7a7a7a;
}

.caret.up {
    transform: rotate(180deg);
}

/* task pane */
.palette {
    display: flex;
    width: 263px;
    padding: 2px 0 2px 8px;
}

.side-tabs {
    width: 23px;
    padding-top: 24px;
}

.side-tabs button {
    width: 23px;
    height: 132px;
    border: 1px solid #222933;
    border-radius: 0 4px 4px 0;
    background-color: #2e3440;
    color: #b8bcc4;
    writing-mode: vertical-rl;
    text-orientation: sideways;
    transform: rotate(180deg);
}

.side-tabs .on {
    border-left: 0;
    background-color: #3b4453;
    color: #e8e8e8;
}

.pane {
    display: flex;
    flex-direction: column;
    flex: 1;
    border-bottom: 1px solid #2e3440;
    border-radius: 4px;
}

.pane h2 {
    display: flex;
    align-items: center;
    gap: 5px;
    height: 22px;
    padding-left: 6px;
    border-radius: 4px 4px 0 0;
    background-color: #2e3440;
}

.pane-body {
    display: flex;
    flex-direction: column;
    flex: 1;
    padding: 7px 11px 13px;
    font-size: 11px;
}

.map-row {
    display: flex;
    align-items: center;
    justify-content: space-between;
    padding: 0 1px;
}

.map-row .combo {
    width: 143px;
    height: 21px;
    font-size: 12px;
}

.pane-tools {
    display: flex;
    height: 55px;
    margin-top: 8px;
    padding: 0 1px;
    border: 1px solid #2e3440;
}

.pane-tools button {
    flex-direction: column;
    gap: 1px;
    width: 30px;
    padding-top: 5px;
}

.pane-tools button:disabled {
    color: #757c88;
}

.pane-tools svg {
    width: 24px;
    height: 24px;
}

.mode-row {
    display: flex;
    align-items: center;
    height: 28px;
    margin: 10px 0 7px;
    color: #d0d3d8;
}

.mode-row button {
    gap: 6px;
    height: 28px;
}

.mode-row .on {
    width: 39px;
    background-color: #222933;
}

.mode-sep {
    width: 1px;
    height: 25px;
    margin: 0 9px 0 8px;
    background-color: #767b85;
}

.tree {
    display: flex;
    flex: 1;
    padding: 4px;
    padding-bottom: 5px;
    border: 1px solid #7f7f7f;
}

.tree-list {
    flex: 1;
    background-color: #f4f4f4;
    color: #333;
    font-size: 12px;
}

.tree-row {
    display: flex;
    align-items: center;
    height: 27px;
    padding-left: 11px;
}

.tree-row.child {
    padding-left: 55px;
}

.tree-row input {
    appearance: none;
    width: 14px;
    height: 14px;
    border: 1px solid #6a6a6a;
    border-radius: 2px;
    background-color: #fff;
}

.tree-row svg + input {
    margin-left: 8px;
}

.tree-row input:checked::before {
    content: "";
    display: block;
    width: 4px;
    height: 8px;
    margin: 0 0 0 4px;
    border: solid #666;
    border-width: 0 2px 2px 0;
    transform: rotate(45deg);
}

.swatch {
    width: 48px;
    height: 16px;
    margin: 0 11px 0 5px;
    padding: 8px 3px;
    background-color: #fff;
}

.swatch.line::before {
    content: "";
    display: block;
    height: 1px;
    background-color: #d7d7d7;
}

.italic {
    font-style: italic;
}

/* status bar */
.statusbar {
    display: flex;
    flex: none;
    height: 32px;
    padding: 0 5px 0 15px;
}

.statusbar button {
    height: 24px;
}

.burger {
    width: 24px;
}

.layout {
    padding: 0 7px;
}

.layout.on {
    width: 59px;
    margin-left: 4px;
    background-color: #3b4453;
    font-weight: bold;
    clip-path: polygon(10px 0, 100% 0, 49px 100%, 0 100%);
}

.slash {
    width: 10px;
    height: 16px;
    margin-top: 4px;
    background-color: #465060;
    clip-path: polygon(8px 0, 9px 0, 2px 100%, 1px 100%);
}

.plus {
    width: 30px;
}

.status-tools {
    display: flex;
    gap: 3px;
    margin-left: auto;
    padding-top: 2px;
}

.group {
    display: flex;
    align-items: center;
    height: 24px;
    background-color: #3b4453;
}

.group svg {
    width: 16px;
    height: 16px;
}

.cell {
    width: 24px;
    border: 1px solid #3b4453;
}

.cell.on {
    background-color: #5f8dc0;
}

.cell.dim {
    background-color: #536e96;
}

.mini {
    width: 16px;
}

.g-scale,
.g-geo,
.g-vp button:first-child {
    justify-content: space-between;
    padding: 0 4px;
}

.g-scale {
    width: 54px;
}

.g-scale span {
    margin-right: 6px;
}

.g-geo {
    width: 68px;
}

.g-vp {
    width: 120px;
}

.g-vp button:first-child {
    width: 97px;
}

.g-model {
    width: 27px;
}

.g-ortho {
    width: 104px;
}

.g-snap {
    width: 63px;
}

.g-warn {
    width: 30px;
    justify-content: center;
}

/* application menu */
.menu {
    position: absolute;
    left: 11px;
    top: 27px;
    display: grid;
    grid-template-columns: 139px 283px;
    grid-template-rows: 37px 1fr;
    width: 424px;
    height: 596px;
    border: 1px solid #222933;
    border-top: 0;
    background-color: #3b4453;
    font-size: 11px;
}

.menu-top {
    grid-column: 1 / 3;
    padding: 10px 8px 0 143px;
}

.menu-search {
    display: flex;
    align-items: center;
    height: 18px;
    padding: 0 3px 0 2px;
    background-color: #464e60;
}

.menu-search input {
    flex: 1;
}

.menu-search svg {
    opacity: 0.7;
}

.menu-search input::placeholder {
    color: #8a909c;
    font-style: italic;
}

.menu-nav {
    padding-left: 1px;
}

.recent {
    display: flex;
    justify-content: flex-end;
    gap: 4px;
    height: 39px;
    padding: 11px 8px 0 0;
    align-items: flex-start;
}

.item {
    justify-content: flex-start;
    gap: 6px;
    width: 100%;
    height: 46px;
    padding-left: 15px;
    text-align: left;
}

.item svg {
    width: 32px;
    height: 32px;
}

.item span {
    width: 46px;
    white-space: normal;
}

.item.on {
    background-color: #2e3440;
}

.item.more::after {
    content: "";
    width: 4px;
    height: 8px;
    margin-left: 16px;
    background-color: #eee;
    clip-path: polygon(0 0, 100% 50%, 0 100%);
}

.menu-nav hr {
    height: 1px;
    margin: 1px 0 1px 10px;
    border: 0;
    background-color: #5a6373;
}

.menu-side {
    display: flex;
    flex-direction: column;
    margin-left: 3px;
    border: 1px solid #30384a;
    border-width: 1px 0 0 1px;
    background-color: #464e60;
}

.submenu {
    flex: 1;
    margin: 7px 11px 0 -5px;
    padding: 0 10px;
    border: 1px solid #343b49;
    background-color: #464e60;
}

.submenu h3 {
    height: 37px;
    margin-bottom: 14px;
    padding-top: 10px;
    border-bottom: 1px solid #777e8c;
    font-size: 11px;
    font-weight: bold;
}

.entry {
    align-items: flex-start;
    gap: 10px;
    height: 48px;
    margin-bottom: 22px;
    padding-left: 6px;
}

.entry svg {
    margin-top: 8px;
}

.entry span {
    width: 204px;
    text-align: left;
    white-space: normal;
}

.entry b {
    display: block;
}

.dwg {
    fill: #333;
    font-size: 8px;
    font-weight: bold;
}

.menu-foot {
    display: flex;
    justify-content: flex-end;
    align-items: flex-start;
    gap: 12px;
    height: 54px;
    padding: 16px 9px 0 0;
}

.menu-foot button {
    height: 26px;
    padding: 0 4px;
    border: 1px solid #8a93a3;
}
```
